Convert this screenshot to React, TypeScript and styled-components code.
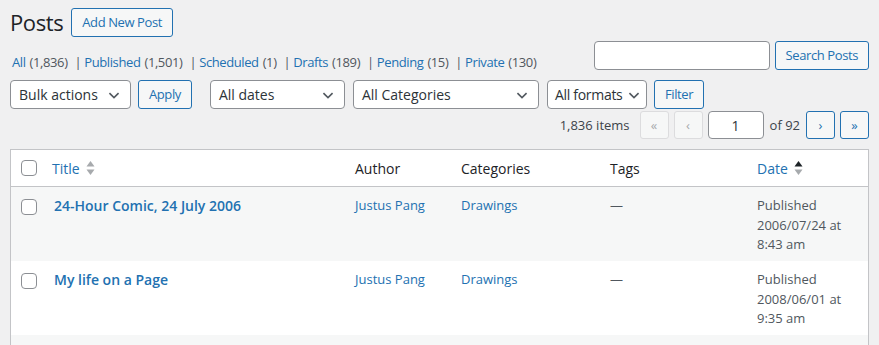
import React from "react";
import styled, { createGlobalStyle } from "styled-components";

const GlobalStyle = createGlobalStyle`
  html, body {
    margin: 0;
    padding: 0;
    background: #f0f0f1;
  }
  body {
    font-family: "Open Sans", "Noto Sans", sans-serif;
    font-size: 13px;
    color: #3c434a;
  }
  * { box-sizing: border-box; }
`;

type Post = {
  title: string;
  author: string;
  category: string;
  date: string;
  time: string;
};

const posts: Post[] = [
  { title: "24-Hour Comic, 24 July 2006", author: "Justus Pang", category: "Drawings", date: "2006/07/24", time: "8:43 am" },
  { title: "My life on a Page", author: "Justus Pang", category: "Drawings", date: "2008/06/01", time: "9:35 am" },
];

const views = [
  { label: "All", count: "1,836" },
  { label: "Published", count: "1,501" },
  { label: "Scheduled", count: "1" },
  { label: "Drafts", count: "189" },
  { label: "Pending", count: "15" },
  { label: "Private", count: "130" },
];

const Chevron = () => (
  <svg width="16" height="16" viewBox="0 0 20 20">
    <path d="M5 7l5 5 5-5 1.4 1.4L10 14.8 3.6 8.4z" fill="#50575e" />
  </svg>
);

const SortIcon: React.FC<{ active?: boolean }> = ({ active }) => (
  <SortWrap>
    <svg width="9" height="16" viewBox="0 0 9 16">
      <path d="M4.5 1L8.5 6.5H0.5z" fill={active ? "#1d2327" : "#a7aaad"} />
      <path d="M4.5 15L0.5 9.5H8.5z" fill="#a7aaad" />
    </svg>
  </SortWrap>
);

const App: React.FC = () => {
  return (
    <Page>
      <GlobalStyle />
      <Header>
        <Heading>Posts</Heading>
        <Button $h={29}>Add New Post</Button>
      </Header>

      <TopBar>
        <Views>
          {views.map((v, i) => (
            <li key={v.label}>
              <ViewLink>{v.label}</ViewLink> <Count>({v.count})</Count>
              {i < views.length - 1 && <Sep>|</Sep>}
            </li>
          ))}
        </Views>
        <SearchBox>
          <SearchInput />
          <Button $h={29}>Search Posts</Button>
        </SearchBox>
      </TopBar>

      <FilterRow>
        <Select $w={121} $mr={7}>Bulk actions<Chevron /></Select>
        <Button $h={29} $mr={18}>Apply</Button>
        <Select $w={135}>All dates<Chevron /></Select>
        <Select $w={186}>All Categories<Chevron /></Select>
        <Select $w={100} $mr={7} $tight>All formats<Chevron /></Select>
        <Button $h={29}>Filter</Button>
      </FilterRow>

      <Pager>
        <Items>1,836 items</Items>
        <PageBtn disabled>«</PageBtn>
        <PageBtn disabled>‹</PageBtn>
        <PageInput>1</PageInput>
        <OfText>of 92</OfText>
        <PageBtn>›</PageBtn>
        <PageBtn>»</PageBtn>
      </Pager>

      <Table>
        <HeadRow>
          <Cell $cb><Check /></Cell>
          <HeadCell $link>Title<SortIcon /></HeadCell>
          <HeadCell>Author</HeadCell>
          <HeadCell>Categories</HeadCell>
          <HeadCell>Tags</HeadCell>
          <HeadCell $link>Date<SortIcon active /></HeadCell>
        </HeadRow>
        {posts.map((p, i) => (
          <Row key={p.title} $alt={i % 2 === 0}>
            <Cell $cb><Check $row /></Cell>
            <Cell><PostTitle>{p.title}</PostTitle></Cell>
            <Cell><CellLink>{p.author}</CellLink></Cell>
            <Cell><CellLink>{p.category}</CellLink></Cell>
            <Cell><Dash>—</Dash></Cell>
            <Cell>
              Published<br />
              {p.date} at<br />
              {p.time}
            </Cell>
          </Row>
        ))}
        <Row $alt />
      </Table>
    </Page>
  );
};

export default App;

const Page = styled.div`
  padding: 0 10px 0 10px;
  width: 879px;
  height: 345px;
  overflow: hidden;
`;

const Header = styled.div`
  display: flex;
  align-items: center;
  gap: 8px;
  padding-top: 8px;
  height: 37px;
`;

const Heading = styled.h1`
  margin: 0;
  font-size: 22px;
  font-weight: 400;
  letter-spacing: -0.4px;
  line-height: 29px;
  color: #1d2327;
`;

const Button = styled.button<{ $h?: number; $mr?: number }>`
  height: ${(p) => p.$h || 30}px;
  padding: 0 10px;
  margin-right: ${(p) => (p.$mr === undefined ? 7 : p.$mr)}px;
  border: 1px solid #2271b1;
  border-radius: 3px;
  background: #f6f7f7;
  color: #2271b1;
  font-family: inherit;
  font-size: 13px;
  letter-spacing: -0.4px;
  line-height: 1;
  white-space: nowrap;
  &:last-child { margin-right: 0; }
`;

const TopBar = styled.div`
  display: flex;
  justify-content: space-between;
  align-items: flex-end;
  margin-top: 4px;
`;

const Views = styled.ul`
  display: flex;
  margin: 0 0 0 2px;
  padding: 0;
  list-style: none;
  line-height: 20px;
  letter-spacing: -0.4px;
  word-spacing: 1px;
  position: relative;
  top: 2px;

  li { white-space: pre; }
`;

const ViewLink = styled.span`
  color: #2271b1;
`;

const Count = styled.span`
  color: #50575e;
`;

const Sep = styled.span`
  color: #50575e;
  padding: 0 3px 0 7px;
`;

const SearchBox = styled.div`
  display: flex;
  gap: 5px;
`;

const SearchInput = styled.div`
  width: 176px;
  height: 29px;
  background: #fff;
  border: 1px solid #8c8f94;
  border-radius: 4px;
`;

const FilterRow = styled.div`
  display: flex;
  align-items: center;
  margin-top: 10px;
`;

const Select = styled.div<{ $w: number; $mr?: number; $tight?: boolean }>`
  width: ${(p) => p.$w}px;
  height: 29px;
  margin-right: ${(p) => (p.$mr === undefined ? 8 : p.$mr)}px;
  display: flex;
  align-items: center;
  justify-content: space-between;
  padding: 0 ${(p) => (p.$tight ? 4 : 8)}px 0 ${(p) => (p.$tight ? 7 : 8)}px;
  background: #fff;
  border: 1px solid #8c8f94;
  border-radius: 4px;
  color: #2c3338;
  font-size: 14px;
  letter-spacing: ${(p) => (p.$tight ? "-0.3px" : "0")};
  white-space: nowrap;

  svg { flex-shrink: 0; }
`;

const Pager = styled.div`
  display: flex;
  justify-content: flex-end;
  align-items: center;
  gap: 5px;
  margin-top: 2px;
`;

const Items = styled.span`
  margin-right: 5px;
  color: #3c434a;
`;

const PageBtn = styled.button`
  width: 29px;
  height: 28px;
  padding: 0;
  border: 1px solid #2271b1;
  border-radius: 3px;
  background: #f6f7f7;
  color: #2271b1;
  font-family: inherit;
  font-size: 13px;
  line-height: 1;

  &:disabled {
    border-color: #dcdcde;
    color: #a7aaad;
  }
`;

const PageInput = styled.div`
  width: 56px;
  height: 28px;
  display: flex;
  align-items: center;
  justify-content: center;
  background: #fff;
  border: 1px solid #8c8f94;
  border-radius: 4px;
  color: #2c3338;
  font-size: 14px;
`;

const OfText = styled.span`
  padding: 0 1px;
  color: #3c434a;
`;

const Table = styled.div`
  margin-top: 10px;
  background: #fff;
  border: 1px solid #c3c4c7;
  width: 859px;
`;

const columns = "31px 303px 106px 149px 147px 1fr";

const HeadRow = styled.div`
  display: grid;
  grid-template-columns: ${columns};
  border-bottom: 1px solid #c3c4c7;
  height: 37px;
  align-items: center;
`;

const Row = styled.div<{ $alt?: boolean }>`
  display: grid;
  grid-template-columns: ${columns};
  background: ${(p) => (p.$alt ? "#f6f7f7" : "#fff")};
  height: 74px;
`;

const Cell = styled.div<{ $cb?: boolean }>`
  padding: ${(p) => (p.$cb ? "0 0 0 10px" : "9px 10px 8px")};
  color: #50575e;
  font-size: 13px;
  line-height: 19.5px;
  white-space: nowrap;
`;

const HeadCell = styled.div<{ $link?: boolean }>`
  display: flex;
  align-items: center;
  padding: 0 10px;
  font-size: 14px;
  color: ${(p) => (p.$link ? "#2271b1" : "#1d2327")};
`;

const SortWrap = styled.span`
  display: inline-flex;
  margin-left: 6px;
`;

const Check = styled.span<{ $row?: boolean }>`
  display: block;
  width: 16px;
  height: 16px;
  margin-top: ${(p) => (p.$row ? 12 : 0)}px;
  border: 1px solid #8c8f94;
  border-radius: 4px;
  background: #fff;
`;

const PostTitle = styled.span`
  display: block;
  margin-top: -1px;
  padding-left: 2px;
  color: #2271b1;
  font-size: 14px;
  font-weight: 600;
  line-height: 21px;
`;

const CellLink = styled.span`
  color: #2271b1;
`;

const Dash = styled.span`
  color: #50575e;
`;
